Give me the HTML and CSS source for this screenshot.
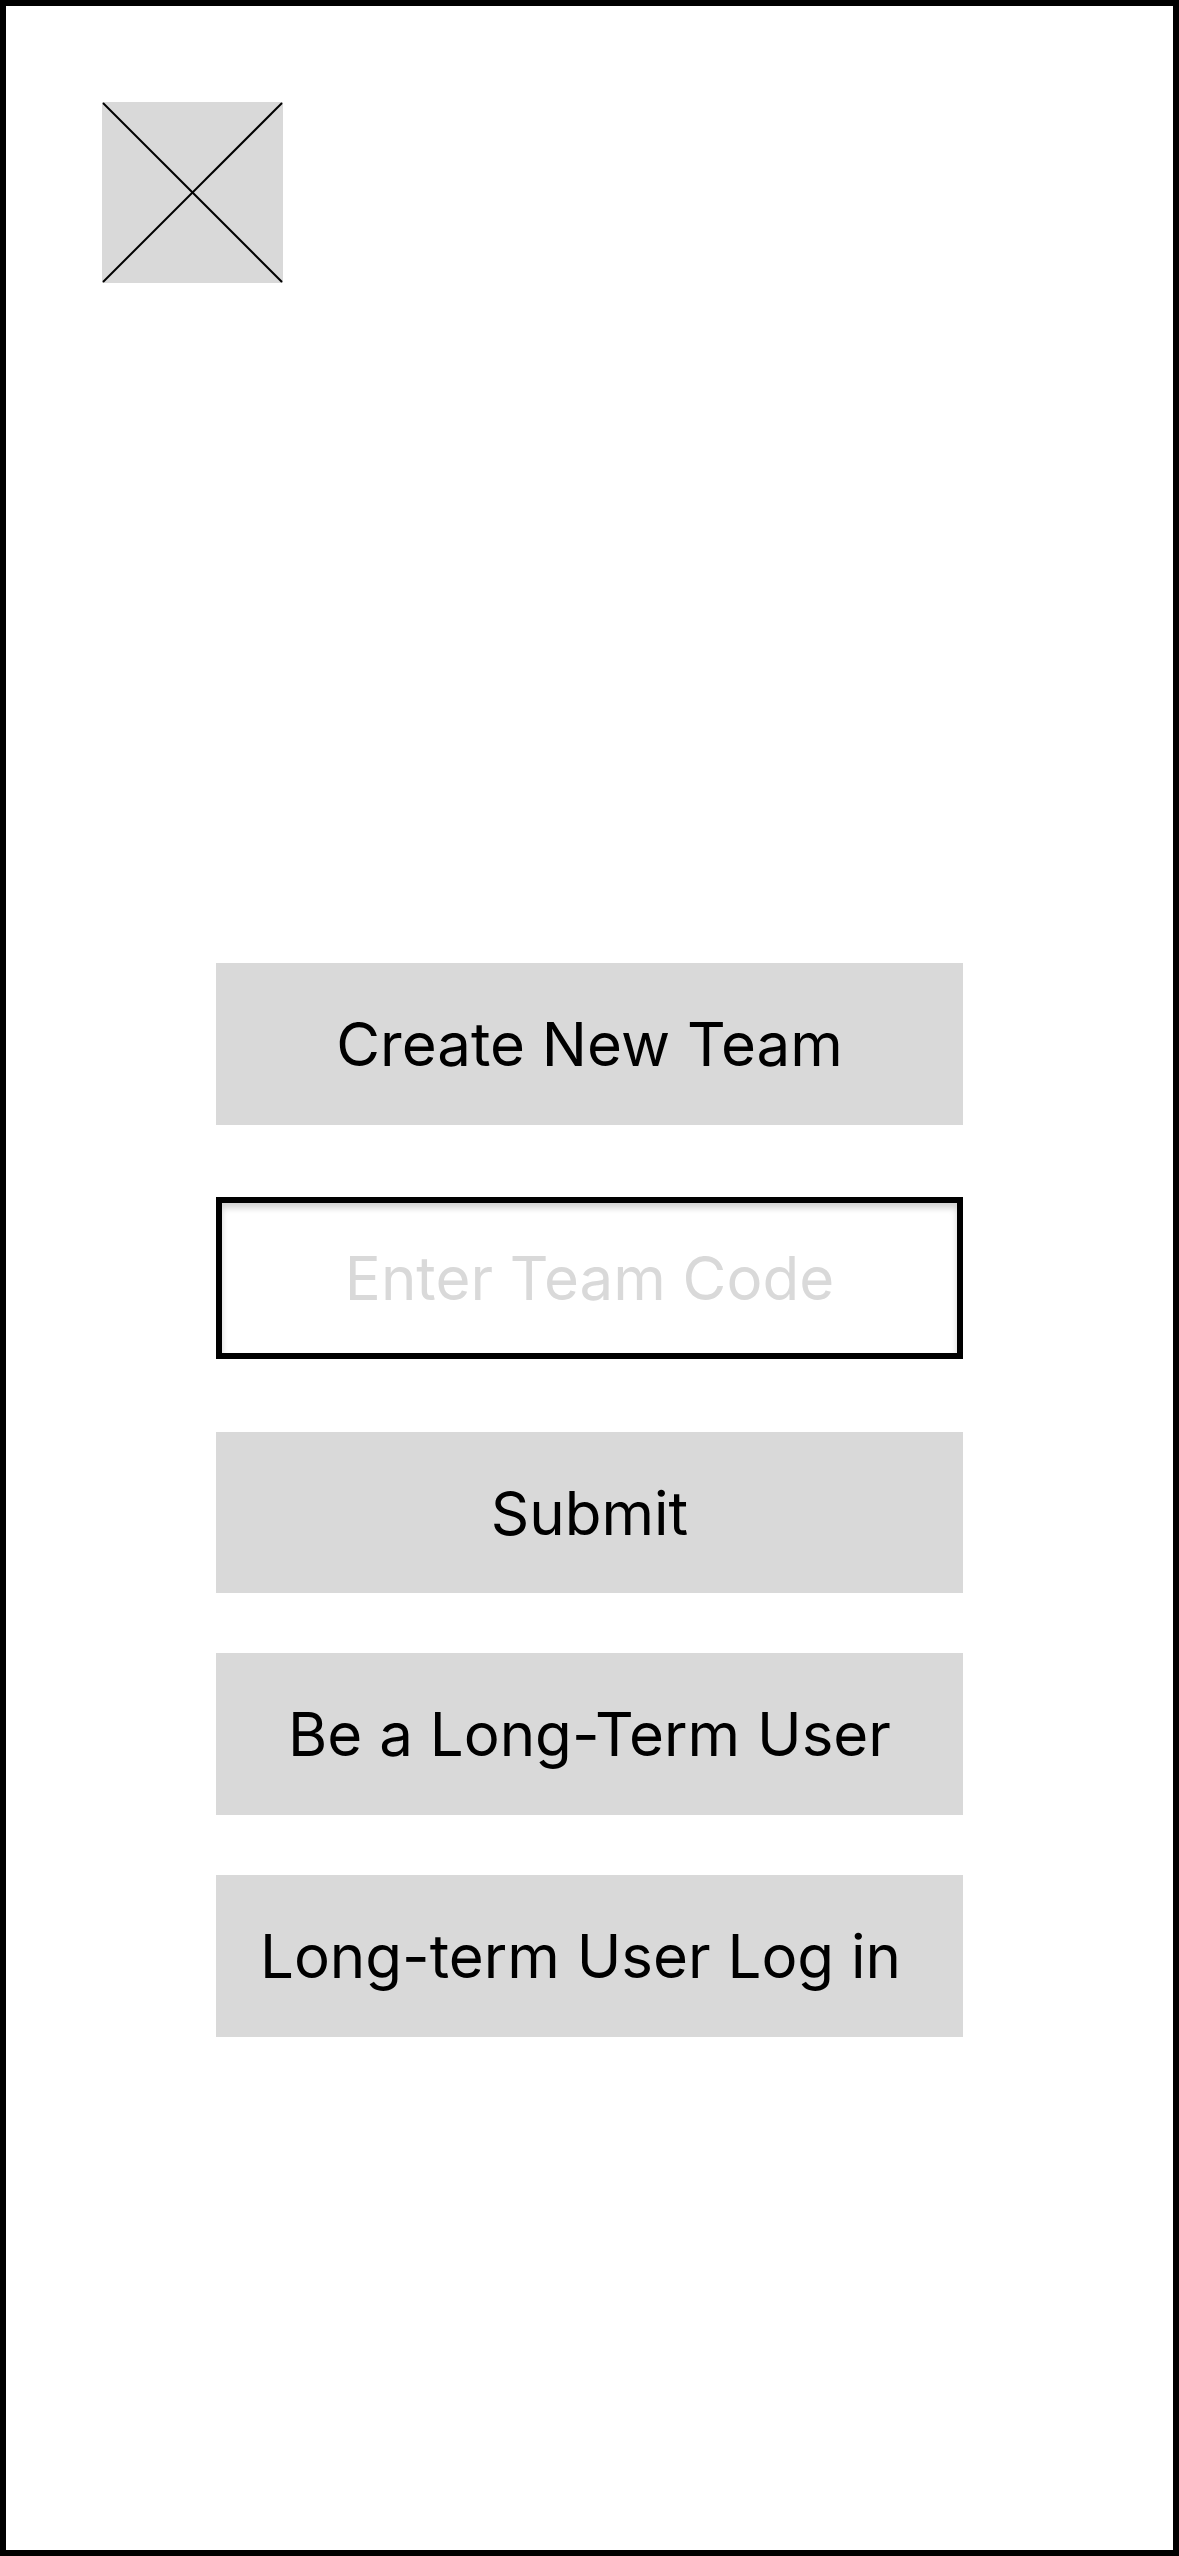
FILE: index.html
```html
<!DOCTYPE html>
<html lang="en">
<head>
<meta charset="utf-8">
<title>Team</title>
<link rel="stylesheet" href="styles.css">
</head>
<body>
<div class="screen">
  <div class="logo">
    <svg viewBox="0 0 181 181" width="181" height="181">
      <rect width="181" height="181" fill="#d9d9d9"/>
      <line x1="1" y1="1" x2="180" y2="180" stroke="#000" stroke-width="2"/>
      <line x1="180" y1="1" x2="1" y2="180" stroke="#000" stroke-width="2"/>
    </svg>
  </div>
  <div class="actions">
    <button class="btn">Create New Team</button>
    <input class="code" type="text" placeholder="Enter Team Code">
    <button class="btn btn-submit">Submit</button>
    <button class="btn btn-list">Be a Long-Term User</button>
    <button class="btn btn-list btn-login">Long-term User Log in</button>
  </div>
</div>
</body>
</html>
```

FILE: styles.css
```css
* { box-sizing: border-box; }
html, body { margin: 0; padding: 0; background: #fff; }
.screen {
  width: 1179px;
  height: 2556px;
  border: 6px solid #000;
  background: #fff;
  padding: 96px 0 0 96px;
  display: flex;
  flex-direction: column;
  font-family: Inter, "Open Sans", sans-serif;
}
.logo { width: 181px; height: 181px; }
.logo svg { display: block; }
.actions {
  margin-top: 680px;
  margin-left: 114px;
  width: 747px;
  display: flex;
  flex-direction: column;
}
.btn {
  height: 162px;
  border: none;
  background: #d9d9d9;
  font-family: Inter, "Open Sans", sans-serif;
  font-size: 60px;
  color: #000;
  padding: 0;
  display: flex;
  align-items: center;
  justify-content: center;
}
.code {
  margin-top: 72px;
  height: 162px;
  border: 6px solid #000;
  background: #fff;
  box-shadow: inset 0 5px 6px rgba(0,0,0,0.18);
  font-family: Inter, "Open Sans", sans-serif;
  font-size: 60px;
  text-align: center;
  padding: 0;
  outline: none;
}
.code::placeholder { color: #d9d9d9; }
.btn-submit { margin-top: 73px; height: 161px; }
.btn-list { margin-top: 60px; }
.btn-login { padding-right: 18px; }
```
